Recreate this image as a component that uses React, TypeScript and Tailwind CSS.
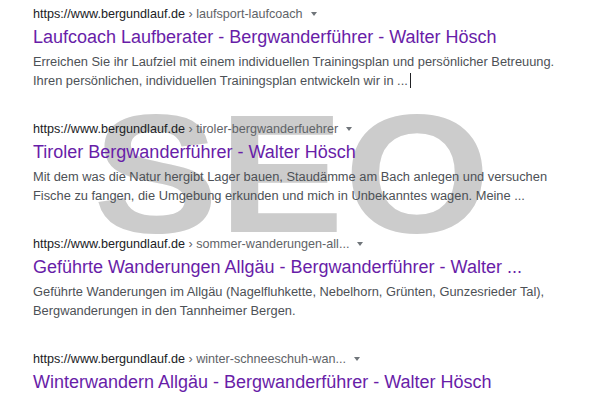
import React from "react";

type Result = {
  crumb: string;
  title: string;
  lines: string[];
  caret?: boolean;
};

const results: Result[] = [
  {
    crumb: "laufsport-laufcoach",
    title: "Laufcoach Laufberater - Bergwanderführer - Walter Hösch",
    lines: [
      "Erreichen Sie ihr Laufziel mit einem individuellen Trainingsplan und persönlicher Betreuung.",
      "Ihren persönlichen, individuellen Trainingsplan entwickeln wir in ...",
    ],
    caret: true,
  },
  {
    crumb: "tiroler-bergwanderfuehrer",
    title: "Tiroler Bergwanderführer - Walter Hösch",
    lines: [
      "Mit dem was die Natur hergibt Lager bauen, Staudämme am Bach anlegen und versuchen",
      "Fische zu fangen, die Umgebung erkunden und mich in Unbekanntes wagen. Meine ...",
    ],
  },
  {
    crumb: "sommer-wanderungen-all...",
    title: "Geführte Wanderungen Allgäu - Bergwanderführer - Walter ...",
    lines: [
      "Geführte Wanderungen im Allgäu (Nagelfluhkette, Nebelhorn, Grünten, Gunzesrieder Tal),",
      "Bergwanderungen in den Tannheimer Bergen.",
    ],
  },
  {
    crumb: "winter-schneeschuh-wan...",
    title: "Winterwandern Allgäu - Bergwanderführer - Walter Hösch",
    lines: [],
  },
];

export default function App() {
  return (
    <div
      className="relative w-[600px] h-[400px] overflow-hidden bg-white"
      style={{ fontFamily: '"Liberation Sans", Arial, sans-serif' }}
    >
      <div className="absolute left-[93px] top-[90px] z-0 origin-left scale-x-[1.12] text-[168px] leading-none font-bold text-[#cccccc] whitespace-nowrap select-none">
        SEO
      </div>
      <div className="relative z-10 pl-[33px] pt-[3.6px] flex flex-col gap-[28.5px]">
        {results.map((r, i) => (
          <div key={i} className="flex flex-col">
            <div className="h-[20px] leading-[20px] text-[12.6px] whitespace-nowrap flex items-center">
              <span className="text-[#202124]">https://www.bergundlauf.de</span>
              <span className="text-[#5f6368]">&nbsp;› {r.crumb}</span>
              <span className="ml-[8px] inline-block w-0 h-0 border-l-[3.5px] border-r-[3.5px] border-t-[4.5px] border-l-transparent border-r-transparent border-t-[#70757a]" />
            </div>
            <div className="h-[26px] leading-[26px] text-[18px] text-[#681da8] whitespace-nowrap">
              {r.title}
            </div>
            {r.lines.length > 0 && (
              <div className="mt-[2.5px] text-[12.85px] leading-[19px] text-[#4d5156]">
                {r.lines.map((l, j) => (
                  <div key={j} className="whitespace-nowrap flex items-center h-[19px]">
                    <span>{l}</span>
                    {r.caret && j === r.lines.length - 1 && (
                      <span className="ml-[2px] inline-block w-px h-[15px] bg-[#202124]" />
                    )}
                  </div>
                ))}
              </div>
            )}
          </div>
        ))}
      </div>
    </div>
  );
}
